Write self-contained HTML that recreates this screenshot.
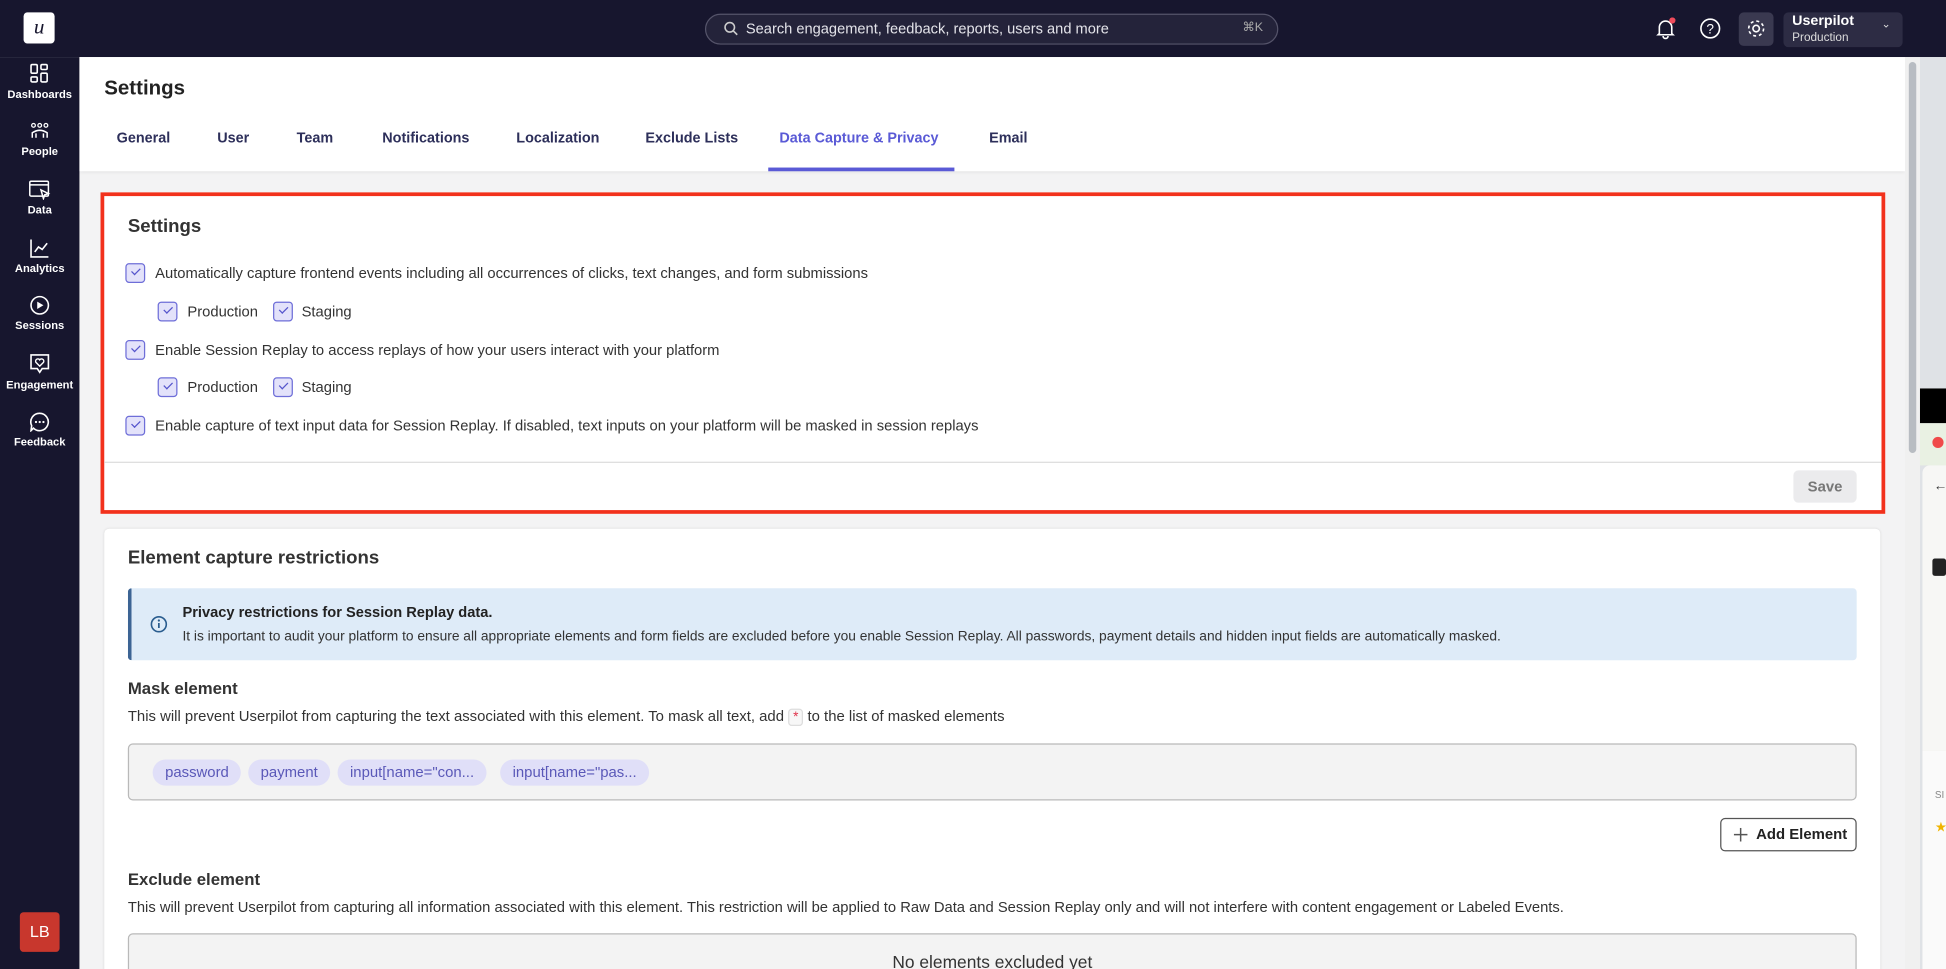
<!DOCTYPE html>
<html><head><meta charset="utf-8">
<style>
*{box-sizing:border-box;margin:0;padding:0}
html,body{width:1946px;height:969px;overflow:hidden;background:#f3f3f4;font-family:"Liberation Sans",sans-serif}
#w{position:absolute;left:0;top:0;width:1568px;height:781px;transform:scale(1.2411);transform-origin:0 0;background:#f3f3f4;overflow:hidden}
.a{position:absolute}
.top{left:0;top:0;width:1568px;height:46px;background:#17162e}
.side{left:0;top:46px;width:64px;height:735px;background:#17162e}
.nav{position:absolute;left:0;width:64px;text-align:center;color:#fff;font-size:9px;font-weight:bold}
.nav svg{display:block;margin:0 auto 3px}
.tab{position:absolute;top:105px;font-size:11.6px;color:#2d2f5a;font-weight:bold}
.cb{position:absolute;width:16px;height:16px;border:1px solid #6e6ed8;background:#e3e2fa;border-radius:3px}
.cb:after{content:"";position:absolute;left:4px;top:3px;width:6px;height:3px;border-left:1.5px solid #5555cc;border-bottom:1.5px solid #5555cc;transform:rotate(-45deg)}
.lbl{position:absolute;font-size:11.9px;color:#333}
.chip{position:absolute;top:612px;height:21px;border-radius:11px;background:#e0dff8;color:#5a58b8;font-size:12px;line-height:21px;padding:0 10px}
</style></head><body><div id="w">
<div class="a top"></div>
<div class="a" style="left:19px;top:10px;width:25px;height:25px;background:#fff;border-radius:3px;font-family:'Liberation Serif',serif;font-style:italic;font-size:17px;text-align:center;line-height:24px;color:#17162e">u</div>
<div class="a" style="left:568px;top:11px;width:462px;height:25px;border:1px solid #55546a;border-radius:13px;background:#24233a"></div>
<svg class="a" style="left:583px;top:17px" width="12" height="12" viewBox="0 0 12 12"><circle cx="5" cy="5" r="3.8" fill="none" stroke="#ccc" stroke-width="1.3"/><path d="M8 8l3 3" stroke="#ccc" stroke-width="1.3"/></svg>
<div class="a" style="left:601px;top:16px;font-size:11.8px;color:#e4e4ea">Search engagement, feedback, reports, users and more</div>
<div class="a" style="left:1001px;top:17px;font-size:10px;color:#aaa">⌘K</div>
<svg class="a" style="left:1333px;top:14px" width="18" height="18" viewBox="0 0 18 18"><path d="M4 13V8a5 5 0 0110 0v5l1 1H3z M7 15a2 2 0 004 0" fill="none" stroke="#fff" stroke-width="1.3"/><circle cx="14.5" cy="2.5" r="2.5" fill="#ef4b5b"/></svg>
<svg class="a" style="left:1369px;top:14px" width="18" height="18" viewBox="0 0 18 18"><circle cx="9" cy="9" r="7.5" fill="none" stroke="#fff" stroke-width="1.3"/><text x="9" y="13" text-anchor="middle" font-size="11" fill="#fff" font-family="Liberation Sans">?</text></svg>
<div class="a" style="left:1401px;top:10px;width:28px;height:27px;background:#3a3950;border-radius:4px"></div>
<svg class="a" style="left:1406px;top:14px" width="18" height="18" viewBox="0 0 18 18"><circle cx="9" cy="9" r="2.6" fill="none" stroke="#fff" stroke-width="1.3"/><circle cx="9" cy="9" r="6" fill="none" stroke="#fff" stroke-width="1.3" stroke-dasharray="2.4 2.3"/></svg>
<div class="a" style="left:1437px;top:10px;width:96px;height:28px;background:#2d2c44;border-radius:4px"></div>
<div class="a" style="left:1444px;top:11px;font-size:11.5px;font-weight:bold;color:#fff">Userpilot</div>
<div class="a" style="left:1444px;top:25px;font-size:9.5px;color:#ddd">Production</div>
<div class="a" style="left:1516px;top:14px;font-size:9px;color:#ddd">⌄</div>

<div class="a side"></div>
<div class="nav" style="top:51px"><svg width="16" height="17" viewBox="0 0 16 17"><rect x="1" y="1" width="5" height="7" rx="1" fill="none" stroke="#fff" stroke-width="1.3"/><rect x="1" y="11" width="5" height="4" rx="1" fill="none" stroke="#fff" stroke-width="1.3"/><rect x="9" y="1" width="5" height="4" rx="1" fill="none" stroke="#fff" stroke-width="1.3"/><rect x="9" y="8" width="5" height="7" rx="1" fill="none" stroke="#fff" stroke-width="1.3"/></svg>Dashboards</div>
<div class="nav" style="top:98px"><svg width="16" height="16" viewBox="0 0 16 16"><circle cx="3" cy="3" r="1.5" fill="none" stroke="#fff"/><circle cx="8" cy="3" r="1.5" fill="none" stroke="#fff"/><circle cx="13" cy="3" r="1.5" fill="none" stroke="#fff"/><path d="M2 13V9q6-4 12 0v4M5 13V9.5M11 13V9.5" fill="none" stroke="#fff" stroke-width="1.2"/></svg>People</div>
<div class="nav" style="top:145px"><svg width="18" height="16" viewBox="0 0 18 16"><rect x="1" y="1" width="15" height="12" rx="1" fill="none" stroke="#fff" stroke-width="1.2"/><path d="M1 4h15M10 8l6 3-3 1-1 3z" fill="none" stroke="#fff" stroke-width="1.2"/></svg>Data</div>
<div class="nav" style="top:192px"><svg width="16" height="16" viewBox="0 0 16 16"><path d="M1 1v14h14M4 11l3-4 3 2 4-5" fill="none" stroke="#fff" stroke-width="1.3"/></svg>Analytics</div>
<div class="nav" style="top:238px"><svg width="16" height="16" viewBox="0 0 16 16"><circle cx="8" cy="8" r="7" fill="none" stroke="#fff" stroke-width="1.3"/><path d="M6 5v6l5-3z" fill="#fff"/></svg>Sessions</div>
<div class="nav" style="top:285px"><svg width="16" height="17" viewBox="0 0 16 17"><path d="M1 1h14v11H10l-2 3-2-3H1z" fill="none" stroke="#fff" stroke-width="1.3"/><path d="M8 10L5 7a1.6 1.6 0 013-2 1.6 1.6 0 013 2z" fill="none" stroke="#fff" stroke-width="1.1"/></svg>Engagement</div>
<div class="nav" style="top:332px"><svg width="16" height="16" viewBox="0 0 16 16"><path d="M8 1a7 7 0 11-5 12l-2 2 .5-4A7 7 0 018 1z" fill="none" stroke="#fff" stroke-width="1.3"/><circle cx="5" cy="8" r=".9" fill="#fff"/><circle cx="8" cy="8" r=".9" fill="#fff"/><circle cx="11" cy="8" r=".9" fill="#fff"/></svg>Feedback</div>
<div class="a" style="left:16px;top:735px;width:32px;height:32px;background:#c8372d;border-radius:3px;color:#fff;font-size:13px;text-align:center;line-height:32px">LB</div>

<div class="a" style="left:64px;top:46px;width:1471px;height:92px;background:#fff;box-shadow:0 1px 3px rgba(0,0,0,.08)"></div>
<div class="a" style="left:84px;top:62px;font-size:16.5px;font-weight:bold;color:#222">Settings</div>
<div class="tab" style="left:94px">General</div>
<div class="tab" style="left:175px">User</div>
<div class="tab" style="left:239px">Team</div>
<div class="tab" style="left:308px">Notifications</div>
<div class="tab" style="left:416px">Localization</div>
<div class="tab" style="left:520px">Exclude Lists</div>
<div class="tab" style="left:628px;color:#5a5ad6">Data Capture &amp; Privacy</div>
<div class="tab" style="left:797px">Email</div>
<div class="a" style="left:619px;top:135px;width:150px;height:3px;background:#5a5ad6"></div>

<div class="a" style="left:1535px;top:46px;width:12px;height:735px;background:#f0f0f0"></div>
<div class="a" style="left:1538px;top:50px;width:6px;height:315px;background:#b8bcc2;border-radius:3px"></div>
<div class="a" style="left:1547px;top:46px;width:21px;height:735px;background:#dfe2e6"></div>
<div class="a" style="left:1547px;top:313px;width:21px;height:28px;background:#000"></div>
<div class="a" style="left:1547px;top:341px;width:21px;height:34px;background:#e9f1e3"></div>
<div class="a" style="left:1557px;top:352px;width:9px;height:9px;border-radius:50%;background:#f04a4a"></div>
<div class="a" style="left:1549px;top:375px;width:19px;height:230px;background:#f7f7f5;border-radius:6px 0 0 0"></div>
<div class="a" style="left:1549px;top:605px;width:19px;height:176px;background:#fafafa"></div>
<div class="a" style="left:1558px;top:386px;font-size:11px;color:#333">←</div>
<div class="a" style="left:1557px;top:450px;width:11px;height:14px;background:#222;border-radius:2px"></div>
<div class="a" style="left:1559px;top:636px;font-size:8px;color:#888">SI</div>
<div class="a" style="left:1559px;top:660px;font-size:11px;color:#f0b400">★</div>

<div class="a" style="left:81px;top:155px;width:1438px;height:259px;background:#fff;border:3px solid #f2311c"></div>
<div class="a" style="left:103px;top:174px;font-size:15px;font-weight:bold;color:#333">Settings</div>
<div class="cb" style="left:101px;top:212px"></div><div class="lbl" style="left:125px;top:213px">Automatically capture frontend events including all occurrences of clicks, text changes, and form submissions</div>
<div class="cb" style="left:127px;top:243px"></div><div class="lbl" style="left:151px;top:244px">Production</div>
<div class="cb" style="left:220px;top:243px"></div><div class="lbl" style="left:243px;top:244px">Staging</div>
<div class="cb" style="left:101px;top:274px"></div><div class="lbl" style="left:125px;top:275px">Enable Session Replay to access replays of how your users interact with your platform</div>
<div class="cb" style="left:127px;top:304px"></div><div class="lbl" style="left:151px;top:305px">Production</div>
<div class="cb" style="left:220px;top:304px"></div><div class="lbl" style="left:243px;top:305px">Staging</div>
<div class="cb" style="left:101px;top:335px"></div><div class="lbl" style="left:125px;top:336px">Enable capture of text input data for Session Replay. If disabled, text inputs on your platform will be masked in session replays</div>
<div class="a" style="left:84px;top:372px;width:1432px;height:1px;background:#ddd"></div>
<div class="a" style="left:1445px;top:379px;width:51px;height:26px;background:#ebebed;border-radius:4px;color:#777;font-size:12px;font-weight:bold;text-align:center;line-height:26px">Save</div>

<div class="a" style="left:84px;top:426px;width:1431px;height:360px;background:#fff;border-radius:4px;box-shadow:0 0 2px rgba(0,0,0,.1)"></div>
<div class="a" style="left:103px;top:441px;font-size:15px;font-weight:bold;color:#333">Element capture restrictions</div>
<div class="a" style="left:103px;top:474px;width:1393px;height:58px;background:#deebf8;border-left:3px solid #3c6494;border-radius:3px"></div>
<svg class="a" style="left:121px;top:496px" width="14" height="14" viewBox="0 0 14 14"><circle cx="7" cy="7" r="6" fill="none" stroke="#2a5d8f" stroke-width="1.3"/><path d="M7 6v4" stroke="#2a5d8f" stroke-width="1.4"/><circle cx="7" cy="4" r=".9" fill="#2a5d8f"/></svg>
<div class="a" style="left:147px;top:486px;font-size:11.8px;font-weight:bold;color:#222">Privacy restrictions for Session Replay data.</div>
<div class="a" style="left:147px;top:507px;font-size:11.1px;color:#333">It is important to audit your platform to ensure all appropriate elements and form fields are excluded before you enable Session Replay. All passwords, payment details and hidden input fields are automatically masked.</div>
<div class="a" style="left:103px;top:547px;font-size:13.5px;font-weight:bold;color:#333">Mask element</div>
<div class="a" style="left:103px;top:570px;font-size:12px;color:#333">This will prevent Userpilot from capturing the text associated with this element. To mask all text, add <span style="display:inline-block;border:1px solid #ddd;background:#f7f7f7;color:#e0334b;border-radius:3px;padding:0 3px;font-size:11px">*</span> to the list of masked elements</div>
<div class="a" style="left:103px;top:599px;width:1393px;height:46px;background:#f3f3f3;border:1px solid #b9b9b9;border-radius:4px"></div>
<div class="chip" style="left:123px">password</div>
<div class="chip" style="left:200px">payment</div>
<div class="chip" style="left:272px">input[name="con...</div>
<div class="chip" style="left:403px">input[name="pas...</div>
<div class="a" style="left:1386px;top:659px;width:110px;height:27px;border:1px solid #555;border-radius:4px;background:#fff;font-size:12px;font-weight:bold;color:#222;line-height:25px;padding-left:28px">Add Element</div>
<svg class="a" style="left:1397px;top:667px" width="11" height="11" viewBox="0 0 11 11"><path d="M5.5 0v11M0 5.5h11" stroke="#555" stroke-width="1.2"/></svg>
<div class="a" style="left:103px;top:701px;font-size:13.5px;font-weight:bold;color:#333">Exclude element</div>
<div class="a" style="left:103px;top:724px;font-size:11.9px;color:#333">This will prevent Userpilot from capturing all information associated with this element. This restriction will be applied to Raw Data and Session Replay only and will not interfere with content engagement or Labeled Events.</div>
<div class="a" style="left:103px;top:752px;width:1393px;height:60px;background:#f3f3f3;border:1px solid #b9b9b9;border-radius:4px"></div>
<div class="a" style="left:719px;top:767px;font-size:14px;color:#333">No elements excluded yet</div>
</div></body></html>
